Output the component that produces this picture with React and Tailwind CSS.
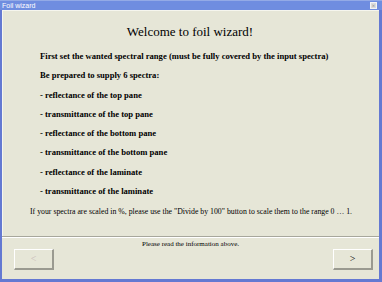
import React from 'react';

const items = [
    '- reflectance of the top pane',
    '- transmittance of the top pane',
    '- reflectance of the bottom pane',
    '- transmittance of the bottom pane',
    '- reflectance of the laminate',
    '- transmittance of the laminate',
];

function NavButton({ label, disabled }) {
    return (
        <button
            type="button"
            disabled={disabled}
            className={`w-[40px] h-[21px] flex items-center justify-center bg-[#e6e6d7] border-t border-l border-t-white border-l-white border-r-2 border-b-2 border-r-[#9a9a90] border-b-[#9a9a90] text-[10px] leading-none ${disabled ? 'text-[#c9b9b9]' : 'text-black'}`}
        >
            {label}
        </button>
    );
}

export default function App() {
    return (
        <div className="w-[382px] h-[282px] bg-[#6479d2] flex flex-col font-['Liberation_Serif',serif] overflow-hidden">
            <div className="h-[10px] bg-[#6f8de0] border-t border-t-[#93aae6] flex items-center justify-between pl-[2px] pr-[5px]">
                <span className="text-[7px] leading-none text-white font-['Liberation_Sans',sans-serif]">Foil wizard</span>
                <div className="w-[7px] h-[7px] bg-[#dcdcdc] border border-[#f4f4f4] flex items-center justify-center text-[6px] leading-none text-[#707070]">×</div>
            </div>
            <div className="flex-1 ml-[2px] mr-[3px] mb-[3px] bg-[#e6e6d7] flex flex-col">
                <div className="h-[226px] border-t border-l border-t-[#f6f6ee] border-l-[#f6f6ee] flex flex-col">
                    <h1 className="mt-[13px] h-[16px] text-[13px] leading-[16px] text-center text-black pr-[2px]">Welcome to foil wizard!</h1>
                    <div className="mt-[7px] pl-[37px] flex flex-col text-[8.6px] leading-[19.3px] font-bold text-black">
                        <p>First set the wanted spectral range (must be fully covered by the input spectra)</p>
                        <p>Be prepared to supply 6 spectra:</p>
                        {items.map(item => (
                            <p key={item}>{item}</p>
                        ))}
                    </div>
                    <p className="mt-[1px] pl-[27px] text-[7.8px] leading-[19px] text-black">
                        If your spectra are scaled in %, please use the "Divide by 100" button to scale them to the range 0 … 1.
                    </p>
                </div>
                <div className="h-px bg-[#a7a79c]" />
                <div className="h-px bg-white" />
                <p className="mt-[2px] text-[7px] leading-[9px] text-center text-black">Please read the information above.</p>
                <div className="mt-0 flex justify-between pl-[12px] pr-[6px]">
                    <NavButton label="<" disabled />
                    <NavButton label=">" />
                </div>
            </div>
        </div>
    );
}
